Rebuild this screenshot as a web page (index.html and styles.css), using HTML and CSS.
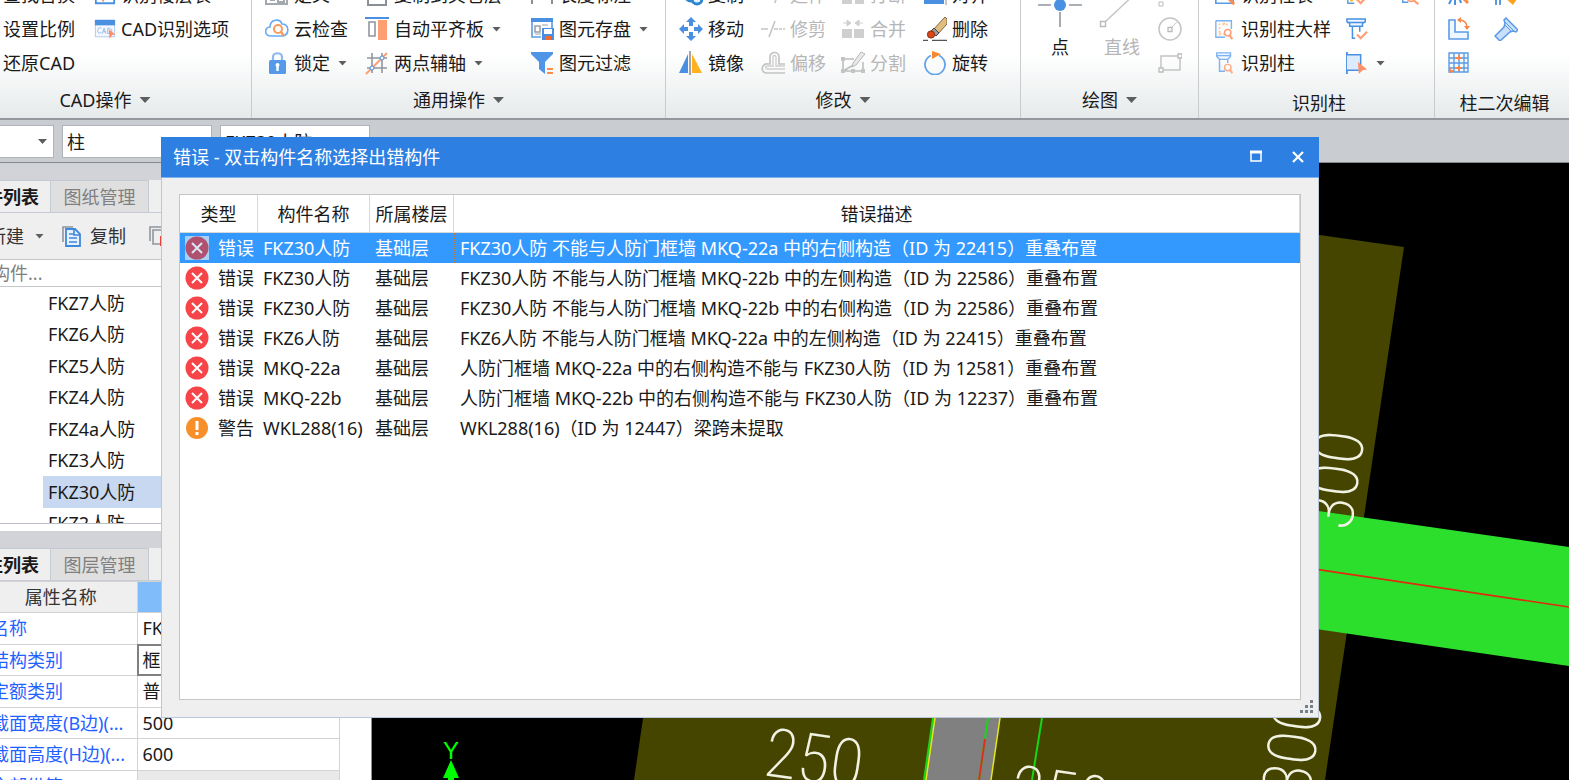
FILE: index.html
```html
<!DOCTYPE html>
<html lang="zh-CN">
<head>
<meta charset="utf-8">
<title>错误 - 双击构件名称选择出错构件</title>
<link rel="stylesheet" href="styles.css">
</head>
<body>
<div class="app">
  <header class="ribbon">
    <section class="group group-cad">
      <div class="tools tools-cad">
        <button class="tool">查找替换</button>
        <button class="tool"><svg class="ic" viewBox="0 0 24 24"><path d="M2 3h20v18H2z" fill="#fff" stroke="#4a90e2" stroke-width="2"/><path d="M10 9v10M15 12h5" stroke="#f58a5a" stroke-width="2"/></svg>识别楼层表</button>
        <button class="tool">设置比例</button>
        <button class="tool"><svg class="ic" viewBox="0 0 24 24"><path d="M1.500 2.500h21v18h-21z" fill="#f4f8fd" stroke="#a9c8ee"/><path d="M1 2h22v6H1z" fill="#4a8fe0"/><path d="M8 11c-3-1-4 1-4 3s1 3 4 2M9 17l2-6 2 6M10 15h3M15 11v6c6 0 6-6 0-6" fill="none" stroke="#8db9ec"/><path d="M16 12l7 6-3 .5-3 4z" fill="#ff8f66"/></svg>CAD识别选项</button>
        <button class="tool">还原CAD</button>
      </div>
      <h2 class="group-title">CAD操作<i class="caret caret-lg"></i></h2>
    </section>

    <section class="group group-common">
      <div class="tools tools-common">
        <button class="tool"><svg class="ic" viewBox="0 0 24 24"><path d="M1 3h21v18H1z" fill="#fff" stroke="#a4a9b0" stroke-width="2"/><path d="M5 17h5M13 15h6v4h-6z" fill="none" stroke="#a4a9b0" stroke-width="2"/></svg>定义</button>
        <button class="tool"><svg class="ic" viewBox="0 0 24 24"><path d="M3 3h18v19H3z" fill="#fff" stroke="#8b9097" stroke-width="2"/></svg>复制到其它层</button>
        <button class="tool"><svg class="ic" viewBox="0 0 24 24"><path d="M2 4v17M22 4v17M2 13h20" fill="none" stroke="#8b9097" stroke-width="2"/></svg>长度标注</button>
        <button class="tool"><svg class="ic" viewBox="0 0 24 24"><path d="M6 19C-1 19-1 10 5 10 5 2 15 1 17 7c7 0 8 10 1 12z" fill="#fff" stroke="#65aaf5" stroke-width="1.600"/><circle cx="13" cy="12" r="4" fill="#fff" stroke="#f79a5c" stroke-width="2"/><path d="M16 15l3 4" stroke="#f79a5c" stroke-width="2.400"/></svg>云检查</button>
        <button class="tool"><svg class="ic" viewBox="0 0 24 24"><path d="M0 1h24" stroke="#4a8fe0" stroke-width="2"/><path d="M4 5h6v14H4z" fill="#fff" stroke="#8f979e" stroke-width="1.600"/><path d="M13 3h9v20h-9z" fill="#ff9d73"/></svg>自动平齐板<i class="caret"></i></button>
        <button class="tool"><svg class="ic" viewBox="0 0 24 24"><path d="M2 3v17h9M22 3v8" fill="none" stroke="#5b9be6" stroke-width="1.600"/><path d="M1 1h22v4H1z" fill="#4a8fe0"/><path d="M5 9h5v6H5z" fill="none" stroke="#9aa1a8" stroke-width="1.600"/><path d="M12 8h6M5 17h6" stroke="#9aa1a8"/><path d="M12 11h12v12H12z" fill="#4a8fe0"/><path d="M14 12h8v5h-8z" fill="#fff"/><path d="M15 19h6v4h-6z" fill="#f26a2c"/></svg>图元存盘<i class="caret"></i></button>
        <button class="tool"><svg class="ic" viewBox="0 0 24 24"><path d="M8 11V6c0-5 9-5 9 0v5" fill="none" stroke="#8fbaf0" stroke-width="2.200"/><rect x="4" y="9" width="17" height="14" rx="1.500" fill="#5599ea"/><path d="M12.500 13v7" stroke="#fff" stroke-width="2.400"/><circle cx="12.500" cy="14" r="2" fill="#fff"/></svg>锁定<i class="caret"></i></button>
        <button class="tool"><svg class="ic" viewBox="0 0 24 24"><path d="M7 2v20M17 2v20M2 7h20M2 17h20" stroke="#8f979e" stroke-width="1.600"/><path d="M1 23L22 2" stroke="#ff9d73" stroke-width="2"/><circle cx="7" cy="17" r="2" fill="#fff" stroke="#4a8fe0"/><circle cx="17" cy="7" r="2" fill="#fff" stroke="#4a8fe0"/></svg>两点辅轴<i class="caret"></i></button>
        <button class="tool"><svg class="ic" viewBox="0 0 24 24"><path d="M1 1h22v2l-8 8v12l-6-5v-7L1 3z" fill="#4f94e6"/><path d="M17 18h6M17 22h6" stroke="#ff8a4a" stroke-width="1.800"/></svg>图元过滤</button>
      </div>
      <h2 class="group-title">通用操作<i class="caret caret-lg"></i></h2>
    </section>

    <section class="group group-modify">
      <div class="tools tools-modify">
        <button class="tool"><svg class="ic" viewBox="0 0 24 24"><circle cx="12" cy="12" r="6" fill="#cfe6fa" stroke="#2f86d0" stroke-width="3"/><circle cx="18" cy="16" r="5" fill="#e8f3fc" stroke="#2f86d0" stroke-width="3"/></svg>复制</button>
        <button class="tool" disabled><svg class="ic" viewBox="0 0 24 24"><path d="M18 4L14 20M2 12h8" stroke="#c4c4c4" stroke-width="1.600"/></svg>延伸</button>
        <button class="tool" disabled><svg class="ic" viewBox="0 0 24 24"><path d="M1 13h10v8H1zM14 13h9v8h-9z" fill="#cfcfcf"/></svg>打断</button>
        <button class="tool"><svg class="ic" viewBox="0 0 24 24"><path d="M1 4h20v17H1z" fill="#4a8fe0"/><path d="M23 2v20" stroke="#8b9097"/></svg>对齐</button>
        <button class="tool"><svg class="ic" viewBox="0 0 24 24"><path d="M12 0l5 5h-3v4h-4V5H7zM12 24l5-5h-3v-4h-4v4H7zM0 12l5-5v3h4v4H5v3zM24 12l-5-5v3h-4v4h4v3z" fill="#4a8fe0"/></svg>移动</button>
        <button class="tool" disabled><svg class="ic" viewBox="0 0 24 24"><path d="M0 12h7M8 20L14 4M13 12h4M18 12h3M22 12h2" stroke="#c4c4c4" stroke-width="1.600"/></svg>修剪</button>
        <button class="tool" disabled><svg class="ic" viewBox="0 0 24 24"><path d="M1 12h10v9H1zM13 12h10v9H13z" fill="#cfcfcf"/><path d="M2 6h6M22 6h-6M6 3l4 3-4 3zM18 3l-4 3 4 3z" fill="#cfcfcf" stroke="#cfcfcf"/></svg>合并</button>
        <button class="tool"><svg class="ic" viewBox="0 0 24 24"><path d="M0 23.500h5M9 23.500h15" stroke="#555" stroke-width="1.400"/><path d="M9 14L22 0l2 2v5L14 18z" fill="#e0bd7e" stroke="#7b6648"/><path d="M8 14l5 5 3-3-5-5z" fill="#9b9b9b" stroke="#444"/><circle cx="8" cy="17.500" r="3.600" fill="#dc4716" stroke="#8a2b0b"/></svg>删除</button>
        <button class="tool"><svg class="ic" viewBox="0 0 24 24"><path d="M0 22L9 3v19z" fill="#4a90e2"/><path d="M13 3l10 19H13z" fill="#ffb21e"/><path d="M11 0v24" stroke="#8a8f95" stroke-width="1.600"/></svg>镜像</button>
        <button class="tool" disabled><svg class="ic" viewBox="0 0 24 24"><path d="M24 22H6c-7 0-6-10 1-9h2V6c0-6 9-6 9 0v7h6" fill="none" stroke="#c4c4c4" stroke-width="1.700"/><path d="M24 18H7c-3 0-3-3 0-3h5V6c0-2 3-2 3 0v9h9" fill="none" stroke="#cfcfcf" stroke-width="1.400"/></svg>偏移</button>
        <button class="tool" disabled><svg class="ic" viewBox="0 0 24 24"><path d="M2 8h11M2 8v12h20v-9M2 20L16 12" fill="none" stroke="#bdbdbd" stroke-width="1.600"/><path d="M11 16l1-4L20 1l4 2-9 11z" fill="#e8e8e8" stroke="#b8b8b8"/><path d="M0 6h4v4H0zM0 18h4v4H0zM20 18h4v4h-4zM10 18h4v4h-4z" fill="#c4c4c4"/></svg>分割</button>
        <button class="tool"><svg class="ic" viewBox="0 0 24 24"><path d="M16 4.500A10 10 0 1 1 8 4.500" fill="none" stroke="#62a2ec" stroke-width="1.800"/><path d="M9 0l9 3-9 5z" fill="#f7882d"/></svg>旋转</button>
      </div>
      <h2 class="group-title">修改<i class="caret caret-lg"></i></h2>
    </section>

    <section class="group group-draw">
      <div class="tools-draw">
        <button class="big-tool"><svg class="ic-big" viewBox="0 0 62 52"><path d="M9 27h13M40 27h13M31 5v13M31 34v15" stroke="#8f979e" stroke-width="1.600"/><circle cx="31" cy="27" r="6" fill="#4a90e2"/></svg>点</button>
        <button class="big-tool" disabled><svg class="ic-big" viewBox="0 0 62 52"><path d="M14 44L46 14" stroke="#c4c4c4" stroke-width="1.400"/><path d="M9.500 43.500h5v5h-5z" fill="#fff" stroke="#bbb" stroke-width="1.400"/></svg>直线</button>
        <div class="mini-tools">
          <button class="tool" disabled aria-label="弧"><svg class="ic" viewBox="0 0 24 24"><path d="M1 19h4v4H1z" fill="#fff" stroke="#bbb"/></svg></button>
          <button class="tool" disabled aria-label="圆"><svg class="ic" viewBox="0 0 24 24"><circle cx="12" cy="12" r="11" fill="none" stroke="#c4c4c4" stroke-width="1.500"/><path d="M12 12l7-7" stroke="#c4c4c4"/><path d="M10 10.500h4v4h-4z" fill="#fff" stroke="#bbb" stroke-width="1.300"/></svg></button>
          <button class="tool" disabled aria-label="矩形"><svg class="ic" viewBox="0 0 24 24"><path d="M3 5h19v14H3z" fill="none" stroke="#c4c4c4" stroke-width="1.500"/><path d="M20 3h4v4h-4zM1 17h4v4H1z" fill="#fff" stroke="#bbb" stroke-width="1.300"/></svg></button>
        </div>
      </div>
      <h2 class="group-title">绘图<i class="caret caret-lg"></i></h2>
    </section>

    <section class="group group-column">
      <div class="tools tools-column">
        <button class="tool"><svg class="ic" viewBox="0 0 24 24"><path d="M2 3v18h19V3" fill="none" stroke="#5b9be6" stroke-width="1.800"/><path d="M14 14l8 8" stroke="#ff8a4a" stroke-width="3"/></svg>识别柱表</button>
        <button class="tool" aria-label="校核柱表"><svg class="ic" viewBox="0 0 24 24"><path d="M2 2v19h7" fill="none" stroke="#5b9be6" stroke-width="1.600"/><path d="M6 14v5" stroke="#ffb21e" stroke-width="3"/><path d="M11 16l5 5 8-9" fill="none" stroke="#ff9d73" stroke-width="2.400"/></svg></button>
        <button class="tool" aria-label="查找柱"><svg class="ic" viewBox="0 0 24 24"><path d="M3 2v18h6" fill="none" stroke="#5b9be6" stroke-width="1.600"/><circle cx="12" cy="15" r="4" fill="none" stroke="#ff9d73" stroke-width="2"/><path d="M15 18l5 4" stroke="#ff9d73" stroke-width="2.400"/></svg></button>
        <button class="tool"><svg class="ic" viewBox="0 0 24 24"><path d="M2 3v18h10M2 3h17v9" fill="#f8fbff" stroke="#7db2f0" stroke-width="1.500"/><path d="M5 7h12M6 6v13M10 6h3M6 17h7" stroke="#ffc58f" stroke-width="2" stroke-dasharray="2 2"/><circle cx="15" cy="16" r="3.500" fill="#fff" stroke="#ff9d73" stroke-width="1.600"/><path d="M17 19l3 4" stroke="#ff9d73" stroke-width="2.200"/></svg>识别柱大样</button>
        <button class="tool" aria-label="校核柱大样"><svg class="ic" viewBox="0 0 24 24"><path d="M1 1h20v3l-3 2v3H4V6L1 4zM1 5h20M7 9v13h3M15 9v6" fill="#eef6ff" stroke="#4a90e2" stroke-width="1.600"/><path d="M12 18l4 4 7-7" fill="none" stroke="#ff9d73" stroke-width="2.400"/></svg></button>
        <span></span>
        <button class="tool"><svg class="ic" viewBox="0 0 24 24"><path d="M3 1h15v4l-3 3H6L3 5zM3 4h15M6 8v13h6M15 8v4" fill="#eef6ff" stroke="#7db2f0" stroke-width="1.500"/><circle cx="15" cy="17" r="3.500" fill="#fff" stroke="#ffab88" stroke-width="1.600"/><path d="M17 19l3 4" stroke="#ffab88" stroke-width="2.200"/></svg>识别柱</button>
        <button class="tool" aria-label="点选识别"><svg class="ic" viewBox="0 0 24 24"><path d="M1 0v24" stroke="#4a90e2" stroke-width="2"/><path d="M1 3h15v17H1" fill="#dcebfd" stroke="#4a90e2" stroke-width="1.600"/><path d="M13 11l10 8-5 1-4 4z" fill="#ff8f66"/></svg><i class="caret"></i></button>
      </div>
      <h2 class="group-title group-title-low">识别柱</h2>
    </section>

    <section class="group group-edit">
      <div class="tools tools-edit">
        <button class="tool" aria-label="调整柱端头"><svg class="ic" viewBox="0 0 24 24"><path d="M2 21l3-6M8 22V12M14 20l-2-6" stroke="#4a90e2" stroke-width="2"/><path d="M13 12l8 8" stroke="#ff8a4a" stroke-width="3"/></svg></button>
        <button class="tool" aria-label="按墙位置绘制柱"><svg class="ic" viewBox="0 0 24 24"><path d="M2 2v20M2 6h18M6 6v16" fill="none" stroke="#4a90e2" stroke-width="1.800"/><path d="M11 15l7-4 5 5-4 6z" fill="#ffa31e"/></svg></button>
        <button class="tool" aria-label="旋转柱"><svg class="ic" viewBox="0 0 24 24"><path d="M2 3h6v12h13v7H2z" fill="#eef6ff" stroke="#5b9be6" stroke-width="1.600"/><path d="M12 3c6 0 8 3 8 8" fill="none" stroke="#f5884a" stroke-width="1.600"/><path d="M14 0l-4 3 4 3zM17 9h6l-3 4z" fill="#f5884a"/></svg></button>
        <button class="tool" aria-label="柱编辑"><svg class="ic" viewBox="0 0 24 24"><path d="M12 1l12 12-2 2-3-1-3 1-10 9-5-5 9-9 1-4-1-3z" fill="#c9dffa" stroke="#5b9be6" stroke-width="1.500"/><path d="M10 4l11 11M11 8l6 6" stroke="#5b9be6"/></svg></button>
        <button class="tool" aria-label="生成柱网"><svg class="ic" viewBox="0 0 24 24"><path d="M2 2h19v19H2zM7 2v19M12 2v19M17 2v19M2 7h19M2 12h19M2 17h19" fill="#f5faff" stroke="#5b9be6" stroke-width="1.400"/><path d="M12 4v5M9 7h6M12 15v5M9 17h6M3 17v5M2 20h5" stroke="#f5884a" stroke-width="1.800"/></svg></button>
      </div>
      <h2 class="group-title group-title-low">柱二次编辑</h2>
    </section>
  </header>

  <nav class="selectors">
    <div class="pick pick-floor"><select aria-label="楼层"><option></option></select><i class="caret"></i></div>
    <div class="pick"><select aria-label="构件类型"><option>柱</option></select></div>
    <div class="pick"><select aria-label="构件"><option>FKZ30人防</option></select></div>
  </nav>

  <main class="workspace">
    <aside class="sidebar">
      <div class="tabs"><button class="tab tab-active">构件列表</button><button class="tab">图纸管理</button></div>
      <div class="list-tools">
        <button class="tool">新建<i class="caret caret-far"></i></button>
        <button class="tool"><svg class="ic" viewBox="0 0 24 24"><path d="M2 18V3h10" fill="none" stroke="#8f979e" stroke-width="1.600"/><path d="M5 5h9l5 5v12H5z" fill="#e6f1fd" stroke="#3f88da" stroke-width="1.800"/><path d="M8 10h5M8 14h8M8 18h8M13 5v6h6" fill="none" stroke="#3f88da" stroke-width="1.600"/></svg>复制</button>
        <button class="tool"><svg class="ic" viewBox="0 0 24 24"><path d="M2 17V3h11M5 6h13v14H5z" fill="none" stroke="#8f979e" stroke-width="1.600"/><path d="M12 12h10v10H12z" fill="#e8413c"/></svg>删除</button>
      </div>
      <input class="search" type="text" placeholder="搜索构件..." aria-label="搜索构件">
      <div class="tree-box">
        <ul class="tree">
          <li>FKZ7人防</li>
          <li>FKZ6人防</li>
          <li>FKZ5人防</li>
          <li>FKZ4人防</li>
          <li>FKZ4a人防</li>
          <li>FKZ3人防</li>
          <li class="picked">FKZ30人防</li>
          <li>FKZ2人防</li>
        </ul>
      </div>
      <div class="tabs tabs-lower"><button class="tab tab-active">属性列表</button><button class="tab">图层管理</button></div>
      <div class="props-box">
        <table class="props">
          <thead><tr><th>属性名称</th><th class="value-head">属性值</th></tr></thead>
          <tbody>
            <tr><td>名称</td><td>FKZ30人防</td></tr>
            <tr><td>结构类别</td><td class="focused">框架柱</td></tr>
            <tr><td>定额类别</td><td>普通柱</td></tr>
            <tr><td>截面宽度(B边)(...</td><td>500</td></tr>
            <tr><td>截面高度(H边)(...</td><td>600</td></tr>
            <tr><td>全部纵筋</td><td class="locked"></td></tr>
          </tbody>
        </table>
      </div>
    </aside>

    <svg class="canvas" viewBox="372 163 1197 617" preserveAspectRatio="xMinYMin slice">
      <path d="M726 151L1404 247L1325 780H634z" fill="#454500"/>
      <path d="M933 718L924 780H991L1000 718z" fill="#808080"/>
      <path d="M933 718L924 780M988 718L979 780M1042 718L1032 780" stroke="#16d616" stroke-width="2"/>
      <path d="M935 718L926 780M1000 718L991 780" stroke="#e6e61a" stroke-width="1.500"/>
      <path d="M985 739L979 780" stroke="#d8321e" stroke-width="2"/>
      <path d="M1200 494L1569 547V666L1200 612z" fill="#2ddf2d"/>
      <path d="M1200 552L1569 607" stroke="#e02a10" stroke-width="1.600"/>
      <text class="dim" transform="translate(762 775) rotate(8)">250</text>
      <text class="dim" transform="translate(1008 812) rotate(8)">250</text>
      <text class="dim" transform="translate(1351 532) rotate(-82)">300</text>
      <text class="dim" transform="translate(1309 800) rotate(-82)">300</text>
      <text class="axis" x="451" y="759">Y</text>
      <path d="M451 760l8 18h-5v2h-6v-2h-5z" fill="#0f0"/>
    </svg>
  </main>
</div>

<section class="dialog" role="dialog" aria-labelledby="dialog-title">
  <header class="dialog-bar">
    <h1 id="dialog-title">错误 - 双击构件名称选择出错构件</h1>
    <button class="win-btn" aria-label="最大化"><svg viewBox="0 0 14 14"><path d="M2 2h10v9H2z" fill="none" stroke="#fff" stroke-width="1.500"/><path d="M1 2h12" stroke="#fff" stroke-width="3"/></svg></button>
    <button class="win-btn" aria-label="关闭"><svg viewBox="0 0 14 14"><path d="M2 2l10 10M12 2L2 12" stroke="#fff" stroke-width="2.200"/></svg></button>
  </header>
  <div class="dialog-body">
    <div class="error-box">
      <table class="errors">
        <colgroup><col class="c-type"><col class="c-name"><col class="c-floor"><col></colgroup>
        <thead><tr><th>类型</th><th>构件名称</th><th>所属楼层</th><th>错误描述</th></tr></thead>
        <tbody>
          <tr class="selected"><td><svg class="mark" viewBox="0 0 24 24"><path d="M0 0h24v24H0z" fill="#a9cff5"/><circle cx="12" cy="12" r="11.500" fill="#b0516f"/><path d="M7 7l10 10M17 7L7 17" stroke="#dbe6f6" stroke-width="2"/></svg>错误</td><td>FKZ30人防</td><td>基础层</td><td>FKZ30人防 不能与人防门框墙 MKQ-22a 中的右侧构造（ID 为 22415）重叠布置</td></tr>
          <tr><td><svg class="mark" viewBox="0 0 24 24"><circle cx="12" cy="12" r="11.500" fill="#f74448"/><path d="M7 7l10 10M17 7L7 17" stroke="#fff" stroke-width="2"/></svg>错误</td><td>FKZ30人防</td><td>基础层</td><td>FKZ30人防 不能与人防门框墙 MKQ-22b 中的左侧构造（ID 为 22586）重叠布置</td></tr>
          <tr><td><svg class="mark" viewBox="0 0 24 24"><circle cx="12" cy="12" r="11.500" fill="#f74448"/><path d="M7 7l10 10M17 7L7 17" stroke="#fff" stroke-width="2"/></svg>错误</td><td>FKZ30人防</td><td>基础层</td><td>FKZ30人防 不能与人防门框墙 MKQ-22b 中的右侧构造（ID 为 22586）重叠布置</td></tr>
          <tr><td><svg class="mark" viewBox="0 0 24 24"><circle cx="12" cy="12" r="11.500" fill="#f74448"/><path d="M7 7l10 10M17 7L7 17" stroke="#fff" stroke-width="2"/></svg>错误</td><td>FKZ6人防</td><td>基础层</td><td>FKZ6人防 不能与人防门框墙 MKQ-22a 中的左侧构造（ID 为 22415）重叠布置</td></tr>
          <tr><td><svg class="mark" viewBox="0 0 24 24"><circle cx="12" cy="12" r="11.500" fill="#f74448"/><path d="M7 7l10 10M17 7L7 17" stroke="#fff" stroke-width="2"/></svg>错误</td><td>MKQ-22a</td><td>基础层</td><td>人防门框墙 MKQ-22a 中的右侧构造不能与 FKZ30人防（ID 为 12581）重叠布置</td></tr>
          <tr><td><svg class="mark" viewBox="0 0 24 24"><circle cx="12" cy="12" r="11.500" fill="#f74448"/><path d="M7 7l10 10M17 7L7 17" stroke="#fff" stroke-width="2"/></svg>错误</td><td>MKQ-22b</td><td>基础层</td><td>人防门框墙 MKQ-22b 中的右侧构造不能与 FKZ30人防（ID 为 12237）重叠布置</td></tr>
          <tr><td><svg class="mark" viewBox="0 0 24 24"><circle cx="12" cy="12" r="11" fill="#f7902a"/><path d="M12 5v9M12 16v3" stroke="#fff" stroke-width="3"/></svg>警告</td><td>WKL288(16)</td><td>基础层</td><td>WKL288(16)（ID 为 12447）梁跨未提取</td></tr>
        </tbody>
      </table>
    </div>
  </div>
  <svg class="grip" viewBox="0 0 13 13"><path d="M10 0h3v3h-3zM5 5h3v3H5zM10 5h3v3h-3zM0 10h3v3H0zM5 10h3v3H5zM10 10h3v3h-3z" fill="#75808c"/></svg>
</section>
</body>
</html>
```

FILE: styles.css
```css
* { box-sizing: border-box; }

body {
  margin: 0;
  overflow: hidden;
  color: #1a1a1a;
  font: 18px/24px "Noto Sans", "Noto Sans CJK SC", sans-serif;
}

button, input, select { font: inherit; color: inherit; }
button { border: 0; padding: 0; background: none; }
h1, h2 { margin: 0; font-size: 18px; font-weight: 400; }
svg { display: block; flex: none; }

.app { display: flex; flex-direction: column; height: 100vh; }

/* Ribbon */
.ribbon {
  display: flex;
  flex: none;
  height: 120px;
  overflow: hidden;
  background: linear-gradient(#fff 45%, #e6eaeb);
  border-bottom: 2px solid #94979c;
}
.group {
  display: flex;
  flex: none;
  flex-direction: column;
  justify-content: flex-end;
  border-left: 1px solid #c9ccce;
}
.group-cad { width: 251px; border-left: 0; }
.group-common { width: 414px; }
.group-modify { width: 355px; }
.group-draw { width: 178px; }
.group-column { width: 236px; }
.group-edit { flex: 1; min-width: 135px; }

.tools { display: grid; flex: none; grid-auto-rows: 34px; }
.tools-cad { grid-template-columns: 91px auto; padding-left: 3px; }
.tools-common { grid-template-columns: 100px 165px auto; padding-left: 13px; }
.tools-modify { grid-template-columns: 82px 80px 82px auto; padding-left: 13px; }
.tools-column { grid-template-columns: 132px 54px auto; padding-left: 15px; }
.tools-edit { grid-template-columns: 47px auto; padding-left: 12px; }
.tools-draw { display: flex; flex: none; padding-left: 8px; }

.tool { display: flex; align-items: center; gap: 5px; white-space: nowrap; }
.tool:disabled, .big-tool:disabled { color: #b6b6b6; }
.ic { width: 24px; height: 24px; }
.tools-cad .ic, .tools-column .ic { width: 22px; height: 22px; }
.big-tool { display: flex; flex-direction: column; align-items: center; width: 62px; line-height: 34px; }
.ic-big { width: 62px; height: 52px; }
.mini-tools { display: grid; grid-auto-rows: 34px; justify-items: center; width: 34px; }

.group-title {
  display: flex;
  flex: none;
  align-items: center;
  justify-content: center;
  gap: 8px;
  height: 38px;
  padding-top: 2px;
}
.group-cad .group-title { padding-right: 41px; }
.group-title-low { padding-top: 8px; padding-left: 5px; }

.caret {
  flex: none;
  width: 9px;
  height: 5px;
  margin-left: 3px;
  background: #5e5e5e;
  clip-path: polygon(0 0, 100% 0, 50% 100%);
}
.caret-far { margin-left: 6px; }
.caret-lg { width: 11px; height: 6px; margin-left: 0; }

/* Selector bar */
.selectors {
  display: flex;
  flex: none;
  gap: 8px;
  height: 43px;
  padding: 5px 0 4px;
  background: #c9ccd1;
  border-bottom: 1px solid #85888c;
}
.pick { position: relative; width: 150px; }
.pick-floor { width: 54px; }
.pick select {
  width: 100%;
  height: 100%;
  padding: 0 4px;
  appearance: none;
  color: #1a1a1a;
  background: #fff;
  border: 1px solid #b0b3b7;
  border-radius: 0;
}
.pick-floor select { border-left: 0; }
.pick .caret { position: absolute; right: 7px; top: 14px; }

/* Workspace */
.workspace { display: flex; flex: 1; min-height: 0; }
.sidebar {
  display: flex;
  flex: none;
  flex-direction: column;
  width: 416px;
  margin-left: -44px;
  background: #fff;
  border-right: 1px solid #8f9397;
}
.tabs {
  display: flex;
  flex: none;
  height: 50px;
  padding-top: 17px;
  background: linear-gradient(#d2d3d8 17px, #efefef 17px);
  border-bottom: 1px solid #c6ccd2;
}
.tab { width: 98px; color: #808080; background: #dfdfdf; border: 1px solid #c3cad1; border-width: 1px 1px 0 0; }
.tab-active { width: 95px; color: #1a1a1a; background: #efefef; font-weight: 700; }

.list-tools { display: flex; flex: none; align-items: center; height: 46px; padding-left: 32px; background: #efefef; color: #333; }
.list-tools .tool:first-child { margin-right: 17px; }
.list-tools .tool:nth-child(2) { margin-right: 22px; }

.search { flex: none; width: 100%; height: 28px; padding: 0; border: 1px solid #c3c7cb; border-width: 1px 0; outline: 0; }
.search::placeholder { color: #808080; opacity: 1; }

.tree-box { flex: none; height: 237px; overflow: hidden; border-bottom: 1px solid #b9bfc5; }
.tree { display: flex; flex-direction: column; height: 252px; margin: 0; padding: 0 0 0 87px; list-style: none; }
.tree li { display: flex; flex: 1; align-items: center; padding-left: 5px; }
.picked { background: #c8d8f0; }
.tabs-lower { margin-top: 7px; }

.props-box { flex: 1; min-height: 0; overflow: hidden; padding-right: 31px; }
.props { width: 100%; height: 221px; table-layout: fixed; border-collapse: collapse; }
.props th, .props td { height: 31px; padding: 0 5px; border: 1px solid #d3d3d3; border-left: 0; white-space: nowrap; overflow: hidden; }
.props th { padding-left: 34px; font-weight: 400; color: #333; background: #efefef; }
.props th:first-child { width: 181px; }
.props .value-head { background: #80bbfa; }
.props td:first-child { padding-left: 35px; color: #1f62ff; }
.props .focused { outline: 2px solid #808080; outline-offset: -2px; }
.props .locked { background: #e9e9e9; }

.canvas { flex: 1; min-width: 0; height: 100%; background: #000; }
.dim { fill: #f2f2e4; font: 200 68px "Roboto Condensed", Roboto, sans-serif; }
.axis { fill: #0f0; font: 24px "Liberation Sans", sans-serif; text-anchor: middle; }

/* Error window */
.dialog {
  position: absolute;
  top: 137px;
  right: 250px;
  bottom: 62px;
  left: 161px;
  display: flex;
  flex-direction: column;
  background: #efefef;
  border: 1px solid #bac7d8;
  border-top: 0;
}
.dialog-bar {
  display: flex;
  flex: none;
  align-items: center;
  height: 41px;
  margin: 0 -1px;
  padding: 0 14px 0 12px;
  color: #fff;
  background: #2d80e2;
  border-bottom: 1px solid #80b1ee;
}
.dialog-bar h1 { flex: 1; }
.win-btn { margin-left: 28px; }
.win-btn svg { width: 14px; height: 14px; }
.dialog-body { flex: 1; min-height: 0; padding: 16px 17px 17px; }
.error-box { height: 100%; overflow: auto; background: #fff; border: 1px solid #c6c6c6; }
.errors { width: 100%; table-layout: fixed; border-collapse: separate; border-spacing: 0; }
.c-type { width: 78px; }
.c-name { width: 112px; }
.c-floor { width: 84px; }
.errors th { height: 38px; padding: 0; font-weight: 400; border-right: 1px solid #d8d8d8; border-bottom: 1px solid #d8d8d8; }
.errors td { height: 30px; padding: 0 5px; white-space: nowrap; }
.errors td:first-child { display: flex; align-items: center; gap: 9px; }
.errors td:last-child { border: 1px solid transparent; }
.selected { color: #fff; background: #3399ff; }
.errors .selected td:last-child { border: 1px dotted #c77b32; }
.mark { width: 24px; height: 24px; }
.grip { position: absolute; right: 5px; bottom: 4px; width: 13px; height: 13px; }
```
